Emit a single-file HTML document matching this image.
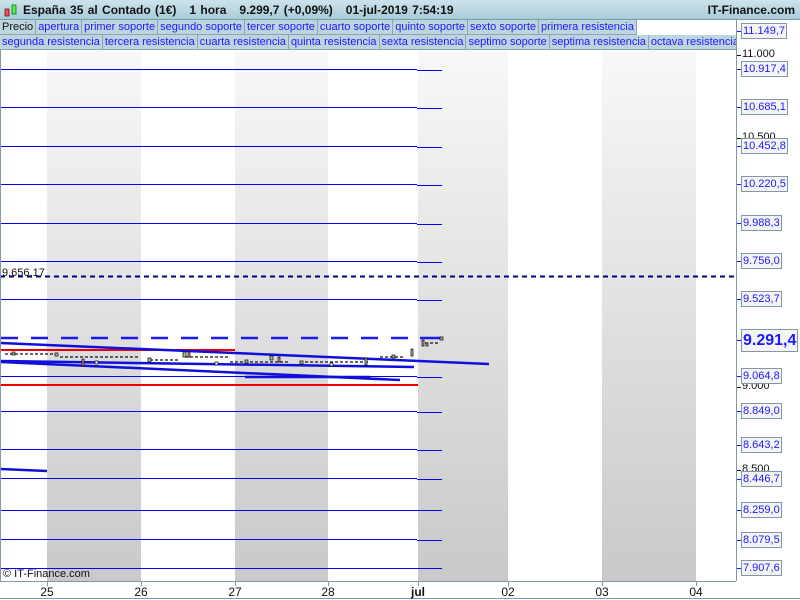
<!DOCTYPE html>
<html><head><meta charset="utf-8"><style>
*{margin:0;padding:0;box-sizing:border-box}
body{width:800px;height:600px;overflow:hidden;background:#fff;font-family:"Liberation Sans",sans-serif;position:relative}
#hdr{position:absolute;left:0;top:0;width:800px;height:20px;background:linear-gradient(#cde3ec,#a9cbd8);border-bottom:1px solid #7f9aa6}
#hdr .t{position:absolute;left:23px;top:3px;font-size:12px;font-weight:bold;color:#111;word-spacing:1px}
#hdr .r{position:absolute;right:5px;top:3px;font-size:12px;font-weight:bold;color:#111}
.row{position:absolute;left:0;height:15px;display:flex;font-size:11px;white-space:nowrap}
.row span{display:block;height:15px;line-height:14px;padding:0 2px;background:#bcd5df;border-right:1px solid #8aa6b1;border-bottom:1px solid #8aa6b1;color:#1a1aff}
.ax{position:absolute;font-size:11px}
.lb{position:absolute;left:741px;height:16px;line-height:14px;padding:0 1px;border:1px solid #7f9aa6;background:#f4f4f4;color:#1a1aff;font-size:11px}
.bk{position:absolute;left:742px;font-size:11px;color:#111}
.dx{position:absolute;top:585px;font-size:12px;color:#111;transform:translateX(-50%)}
</style></head><body>
<svg style="position:absolute;left:0;top:0" width="800" height="600">
<defs><linearGradient id="g" x1="0" y1="0" x2="0" y2="1"><stop offset="0" stop-color="#f8f8f8"/><stop offset="1" stop-color="#c9c9c9"/></linearGradient></defs>
<rect x="47" y="49" width="94" height="532" fill="url(#g)"/>
<rect x="235" y="49" width="93" height="532" fill="url(#g)"/>
<rect x="418" y="49" width="90" height="532" fill="url(#g)"/>
<rect x="602" y="49" width="94" height="532" fill="url(#g)"/>
<g stroke="#0000ee" stroke-width="1">
<path d="M0 69.5H417M0 107.5H417M0 146.5H417M0 184.5H417M0 223.5H417M0 261.5H417M0 299.5H417M0 376.5H417M0 411.5H417M0 449.5H417M0 478.5H417M0 510.5H417M0 539.5H417M0 568.5H417"/>
<path d="M417 70.5H442M417 108.5H442M417 147.5H442M417 185.5H442M417 224.5H442M417 262.5H442M417 300.5H442M417 377.5H442M417 412.5H442M417 450.5H442M417 479.5H442M417 510.5H442M417 540.5H442M417 568.5H442"/>
</g>
<path d="M0 276.5H736" stroke="#000080" stroke-width="2" stroke-dasharray="5,4"/>
<path d="M1 338H418" stroke="#1a1aee" stroke-width="2.5" stroke-dasharray="17,13"/>
<path d="M420 338H442" stroke="#1a1aee" stroke-width="2.5"/>
<path d="M1 350H235M1 385H418" stroke="#ee0000" stroke-width="2"/>
<g stroke="#1010dd" stroke-width="2.5" fill="none">
<path d="M1 343L489 364"/><path d="M1 361L414 367"/><path d="M1 362L400 380"/><path d="M245 377H370"/><path d="M1 469L47 471"/>
</g>
<g stroke="#111" stroke-width="1.2" stroke-dasharray="3,2">
<path d="M5 354H60M60 357H140M150 360H180M185 357H230M230 362H290M300 362H370M380 357H405M425 343H440"/>
</g>
<g stroke="#000" stroke-width="0.7">
<rect x="12" y="352" width="3" height="3" fill="#9c9"/><rect x="55" y="353" width="3" height="3" fill="#9c9"/><rect x="82" y="359" width="2" height="7" fill="#e88"/><rect x="95" y="361" width="3" height="3" fill="#fff"/><rect x="148" y="358" width="3" height="4" fill="#9c9"/><rect x="183" y="352" width="3" height="5" fill="#9c9"/><rect x="188" y="352" width="2" height="5" fill="#e88"/><rect x="215" y="362" width="3" height="3" fill="#fff"/><rect x="245" y="360" width="3" height="3" fill="#9c9"/><rect x="270" y="356" width="3" height="4" fill="#9c9"/><rect x="278" y="357" width="2" height="5" fill="#e88"/><rect x="300" y="361" width="3" height="3" fill="#9c9"/><rect x="330" y="363" width="3" height="3" fill="#fff"/><rect x="365" y="358" width="2" height="7" fill="#9c9"/><rect x="392" y="355" width="3" height="3" fill="#9c9"/><rect x="411" y="349" width="2" height="7" fill="#9c9"/><rect x="422" y="340" width="2" height="6" fill="#e88"/><rect x="426" y="343" width="2" height="3" fill="#9c9"/><rect x="440" y="337" width="3" height="3" fill="#9c9"/>
</g>
<path d="M0.5 20V581" stroke="#7f9aa6"/>
<path d="M736.5 20V581M0 581.5H736" stroke="#7f9aa6"/>
<path d="M0 598.5H800" stroke="#7f9aa6"/>
<g stroke="#7f9aa6"><path d="M47.5 581v5M141.5 581v5M235.5 581v5M328.5 581v5M418.5 581v5M508.5 581v5M602.5 581v5M696.5 581v5"/></g>
<g stroke="#1a1aff"><path d="M737 31.5h4M737 69.5h4M737 107.5h4M737 146.5h4M737 184.5h4M737 223.5h4M737 261.5h4M737 299.5h4M737 340.5h4M737 376.5h4M737 411.5h4M737 445.5h4M737 479.5h4M737 510.5h4M737 540.5h4M737 568.5h4"/></g>
<g stroke="#111"><path d="M737 55.5h4M737 138.5h4M737 387.5h4M737 470.5h4"/></g>
</svg>
<div id="hdr"><svg style="position:absolute;left:4px;top:3px" width="14" height="15"><rect x="1" y="6" width="4" height="7" fill="#e55" stroke="#600" stroke-width=".7"/><rect x="8" y="2" width="4" height="9" fill="#5e5" stroke="#060" stroke-width=".7"/></svg><div class="t">España 35 al Contado (1€)&nbsp;&nbsp;&nbsp;1 hora&nbsp;&nbsp;&nbsp;9.299,7 (+0,09%)&nbsp;&nbsp;&nbsp;01-jul-2019 7:54:19</div><div class="r">IT-Finance.com</div></div>
<div class="row" style="top:20px"><span style="color:#111">Precio</span><span>apertura</span><span>primer soporte</span><span>segundo soporte</span><span>tercer soporte</span><span>cuarto soporte</span><span>quinto soporte</span><span>sexto soporte</span><span>primera resistencia</span></div>
<div class="row" style="top:35px;width:736px;overflow:hidden"><span>segunda resistencia</span><span>tercera resistencia</span><span>cuarta resistencia</span><span>quinta resistencia</span><span>sexta resistencia</span><span>septimo soporte</span><span>septima resistencia</span><span>octava resistencia</span></div>
<div class="ax" style="left:2px;top:267px;color:#111">9.656,17</div>
<div class="ax" style="left:3px;top:568px;color:#111">© IT-Finance.com</div>
<div class="bk" style="top:48px">11.000</div><div class="bk" style="top:131px">10.500</div><div class="bk" style="top:380px">9.000</div><div class="bk" style="top:463px">8.500</div>
<div class="lb" style="top:23px">11.149,7</div>
<div class="lb" style="top:61px">10.917,4</div>
<div class="lb" style="top:99px">10.685,1</div>
<div class="lb" style="top:138px">10.452,8</div>
<div class="lb" style="top:176px">10.220,5</div>
<div class="lb" style="top:215px">9.988,3</div>
<div class="lb" style="top:253px">9.756,0</div>
<div class="lb" style="top:291px">9.523,7</div>
<div class="lb" style="top:329px;height:23px;line-height:21px;font-size:16px;font-weight:bold">9.291,4</div>
<div class="lb" style="top:368px">9.064,8</div>
<div class="lb" style="top:403px">8.849,0</div>
<div class="lb" style="top:437px">8.643,2</div>
<div class="lb" style="top:471px">8.446,7</div>
<div class="lb" style="top:502px">8.259,0</div>
<div class="lb" style="top:532px">8.079,5</div>
<div class="lb" style="top:560px">7.907,6</div>
<div class="dx" style="left:47px">25</div><div class="dx" style="left:141px">26</div><div class="dx" style="left:235px">27</div><div class="dx" style="left:328px">28</div><div class="dx" style="left:418px;font-weight:bold">jul</div><div class="dx" style="left:508px">02</div><div class="dx" style="left:602px">03</div><div class="dx" style="left:696px">04</div>
</body></html>
